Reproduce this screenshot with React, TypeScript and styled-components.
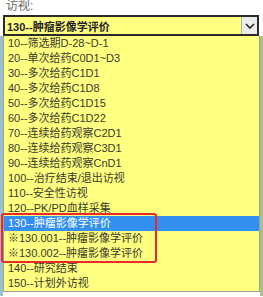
import * as React from "react";
import styled, { createGlobalStyle } from "styled-components";

const GlobalStyle = createGlobalStyle`
  html, body {
    margin: 0;
    padding: 0;
    background: #ffffff;
  }
  body {
    font-family: "Liberation Sans", "Noto Sans CJK SC", sans-serif;
  }
`;

const visits = [
  "10--筛选期D-28~D-1",
  "20--单次给药C0D1~D3",
  "30--多次给药C1D1",
  "40--多次给药C1D8",
  "50--多次给药C1D15",
  "60--多次给药C1D22",
  "70--连续给药观察C2D1",
  "80--连续给药观察C3D1",
  "90--连续给药观察CnD1",
  "100--治疗结束/退出访视",
  "110--安全性访视",
  "120--PK/PD血样采集",
  "130--肿瘤影像学评价",
  "※130.001--肿瘤影像学评价",
  "※130.002--肿瘤影像学评价",
  "140--研究结束",
  "150--计划外访视",
];

const selectedIndex = 12;

const App: React.FunctionComponent = () => {
  return (
    <Page>
      <GlobalStyle />
      <FieldLabel>访视:</FieldLabel>
      <SelectBox>
        <SelectValue>{visits[selectedIndex]}</SelectValue>
        <ArrowButton>
          <svg width="10" height="6" viewBox="0 0 10 6">
            <polyline
              points="1,1 5,5 9,1"
              fill="none"
              stroke="#222"
              strokeWidth="1.6"
            />
          </svg>
        </ArrowButton>
      </SelectBox>
      <ListFrame>
        <OptionList>
          {visits.map((v, i) => (
            <OptionItem key={v} $active={i === selectedIndex}>
              {v}
            </OptionItem>
          ))}
          <Callout />
        </OptionList>
      </ListFrame>
    </Page>
  );
};

export default App;

const Page = styled.div`
  width: 263px;
  height: 297px;
  overflow: hidden;
  background: #ffffff;
`;

const FieldLabel = styled.div`
  height: 15px;
  padding-left: 6px;
  font-size: 12px;
  line-height: 13px;
  color: #666;
`;

const SelectBox = styled.div`
  display: flex;
  align-items: stretch;
  margin-left: 3px;
  width: 256px;
  height: 21px;
  box-sizing: border-box;
  border: 2px solid #2a2a2a;
  background: #ffff80;
`;

const SelectValue = styled.div`
  flex: 1;
  display: flex;
  align-items: center;
  padding-left: 2px;
  font-size: 11px;
  font-weight: bold;
  color: #222;
`;

const ArrowButton = styled.div`
  width: 15px;
  display: flex;
  align-items: center;
  justify-content: center;
  background: #ececec;
  border-left: 1px solid #b5b5b5;
`;

const ListFrame = styled.div`
  display: flex;
  height: 260px;
  background: linear-gradient(
    to right,
    #9dc2c6 0,
    #9dc2c6 3px,
    transparent 3px,
    transparent 260px,
    #a8bf90 260px
  );
`;

const OptionList = styled.div`
  position: relative;
  margin-left: 3px;
  width: 257px;
  height: 256px;
  box-sizing: border-box;
  border: 1px solid #a0a0a0;
  border-top: none;
  background: #ffff80;
  padding-bottom: 1px;
`;

const OptionItem = styled.div<{ $active: boolean }>`
  height: 15px;
  line-height: 15px;
  padding-left: 4px;
  font-size: 11px;
  white-space: nowrap;
  color: ${({ $active }) => ($active ? "#ffffff" : "#3a3a2a")};
  background: ${({ $active }) => ($active ? "#3390f0" : "transparent")};
`;

const Callout = styled.div`
  position: absolute;
  left: -3px;
  top: 177px;
  width: 156px;
  height: 50px;
  box-sizing: border-box;
  border: 2px solid #e82a2a;
  border-radius: 3px;
  pointer-events: none;
`;
